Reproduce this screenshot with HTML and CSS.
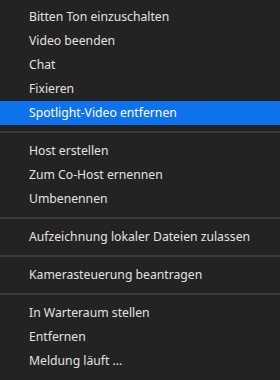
FILE: index.html
```html
<!DOCTYPE html>
<html lang="de">
<head>
    <meta charset="UTF-8">
    <title>Teilnehmermenü</title>
    <link rel="stylesheet" href="styles.css">
</head>
<body>
    <ul class="menu">
        <li class="item">Bitten Ton einzuschalten</li>
        <li class="item">Video beenden</li>
        <li class="item">Chat</li>
        <li class="item">Fixieren</li>
        <li class="item active">Spotlight-Video entfernen</li>
        <li class="sep"></li>
        <li class="item">Host erstellen</li>
        <li class="item">Zum Co-Host ernennen</li>
        <li class="item">Umbenennen</li>
        <li class="sep"></li>
        <li class="item">Aufzeichnung lokaler Dateien zulassen</li>
        <li class="sep"></li>
        <li class="item">Kamerasteuerung beantragen</li>
        <li class="sep"></li>
        <li class="item">In Warteraum stellen</li>
        <li class="item">Entfernen</li>
        <li class="item">Meldung läuft ...</li>
    </ul>
</body>
</html>
```

FILE: styles.css
```css
body { margin: 0; background-color: #232323; font-family: "Noto Sans", "Open Sans", sans-serif; font-size: 12.2px; color: #e2e2e2; }
.menu { list-style: none; margin: 0; padding: 5px 0 0 0; }
.item { height: 24px; line-height: 24px; padding-left: 29px; white-space: nowrap; }
.item.active { background-color: #0e72ed; color: #fff; }
.sep { height: 2px; margin: 6px 0; background-color: #3a3a3a; }
```
